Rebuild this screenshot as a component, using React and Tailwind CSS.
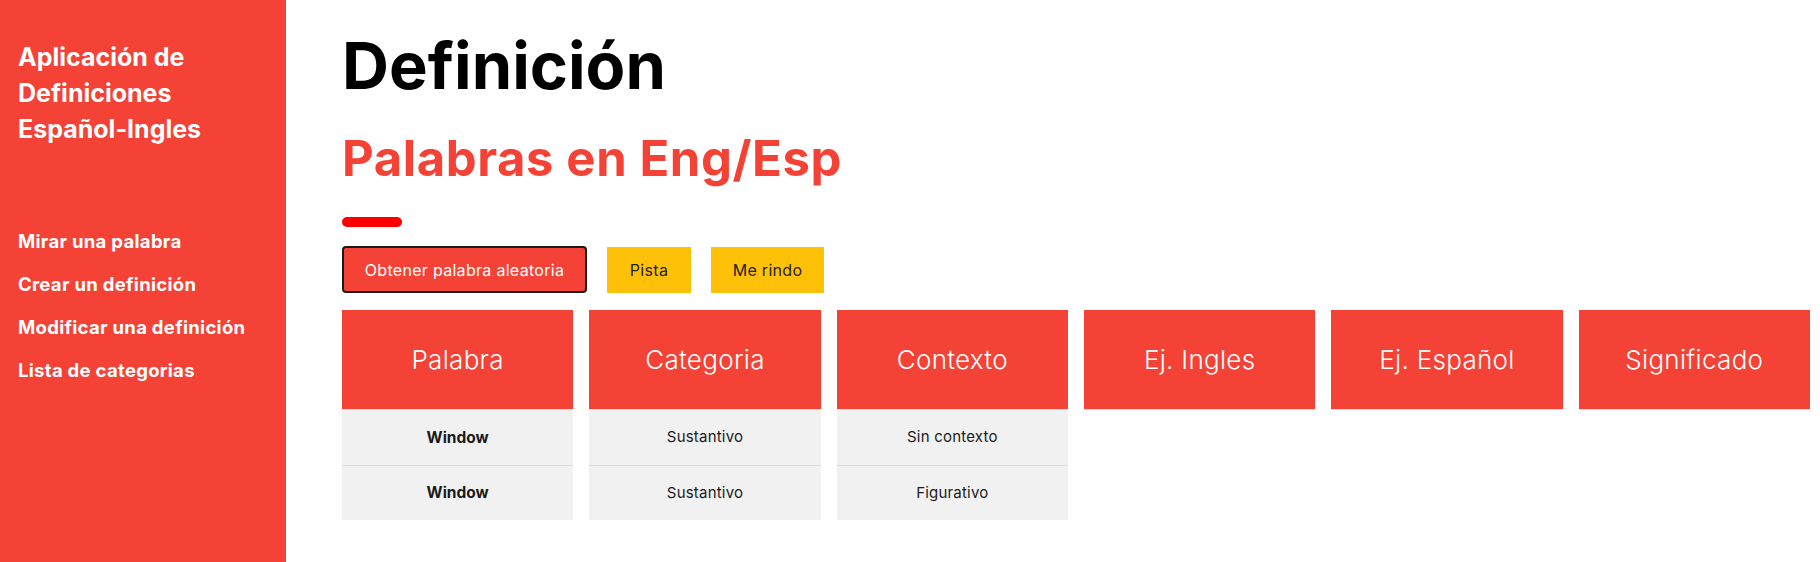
import React from 'react';

const font = { fontFamily: 'Inter, "Noto Sans", sans-serif' };

const navLinks = ['Mirar una palabra', 'Crear un definición', 'Modificar una definición', 'Lista de categorias'];
const columns = [
    { title: 'Palabra', rows: ['Window', 'Window'], bold: true },
    { title: 'Categoria', rows: ['Sustantivo', 'Sustantivo'] },
    { title: 'Contexto', rows: ['Sin contexto', 'Figurativo'] },
    { title: 'Ej. Ingles', rows: [] },
    { title: 'Ej. Español', rows: [] },
    { title: 'Significado', rows: [] },
];

export default function App() {
    return (
        <div className="flex h-screen w-full bg-white overflow-hidden" style={font}>
            {/* Sidebar */}
            <aside className="w-[286px] shrink-0 bg-[#f44336] px-[18px] pt-[39px]">
                <h3 className="text-[25px] leading-[36px] font-bold text-white">
                    Aplicación de<br />Definiciones<br />Español-Ingles
                </h3>
                <nav className="mt-[82px] flex flex-col gap-[19px]">
                    {navLinks.map(link => (
                        <a key={link} className="text-[18.5px] leading-[24px] font-bold text-white tracking-[0.3px]">{link}</a>
                    ))}
                </nav>
            </aside>

            {/* Main */}
            <main className="flex-1 pl-[56px] pr-[10px] pt-[27px]">
                <h1 className="text-[65px] leading-[78px] font-bold text-black">Definición</h1>
                <h2 className="mt-[24px] text-[49px] leading-[60px] font-bold text-[#f44336] tracking-[0.6px]">Palabras en Eng/Esp</h2>
                <div className="mt-[28px] h-[10px] w-[60px] rounded-full bg-[#ff0000]"></div>

                <div className="mt-[19px] flex items-center gap-[20px]">
                    <button className="h-[47px] w-[245px] rounded-[4px] border-2 border-[#1a1a1a] bg-[#f44336] text-[16px] tracking-[0.3px] text-white">
                        Obtener palabra aleatoria
                    </button>
                    <button className="h-[46px] w-[84px] bg-[#ffc107] text-[16px] tracking-[0.3px] text-[#222]">Pista</button>
                    <button className="h-[46px] w-[113px] bg-[#ffc107] text-[16px] tracking-[0.3px] text-[#222]">Me rindo</button>
                </div>

                <div className="mt-[17px] grid grid-cols-6 gap-x-[16px]">
                    {columns.map(col => (
                        <div key={col.title} className="flex flex-col">
                            <div className="flex h-[100px] items-center justify-center border-b border-[#e3e3e3] bg-[#f44336] text-[26px] font-light tracking-[0.3px] text-white">
                                {col.title}
                            </div>
                            {col.rows.map((row, i) => (
                                <div
                                    key={i}
                                    className={`flex h-[55px] items-center justify-center bg-[#f1f1f1] text-[#1a1a1a] ${i > 0 ? 'border-t border-[#dddddd]' : ''} ${col.bold ? 'text-[15.5px] font-bold' : 'text-[15px] tracking-[0.2px]'}`}
                                >
                                    {row}
                                </div>
                            ))}
                        </div>
                    ))}
                </div>
            </main>
        </div>
    );
}
